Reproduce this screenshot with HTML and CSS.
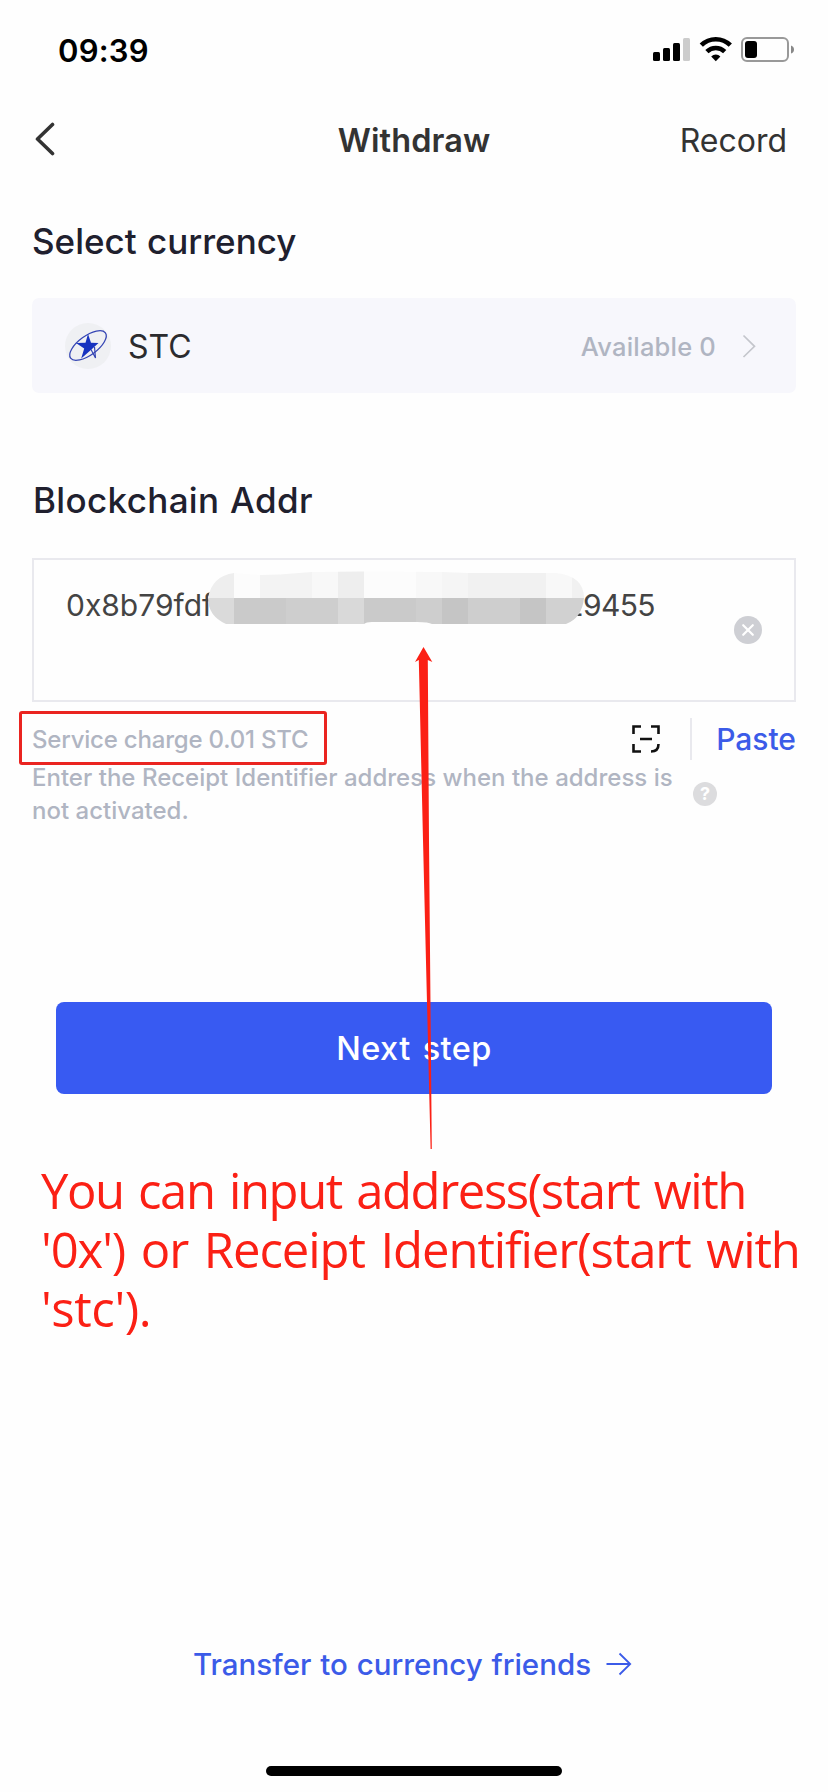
FILE: index.html
```html
<!DOCTYPE html>
<html lang="en">
<head>
<meta charset="utf-8">
<title>Withdraw</title>
<link rel="stylesheet" href="styles.css">
</head>
<body>
<div class="screen">
  <div class="status">
    <span class="time">09:39</span>
    <svg class="status-icons" width="144" height="28" viewBox="652 36 144 28">
      <rect x="653" y="52" width="7" height="9" rx="1.5"/>
      <rect x="663" y="48" width="7" height="13" rx="1.5"/>
      <rect x="673" y="43" width="7" height="18" rx="1.5"/>
      <rect x="683" y="38" width="7" height="23" rx="1.5" fill="#ccc"/>
      <g fill="none" stroke="#000" stroke-width="4.6">
        <path d="M701.300 45.2a20.500 20.500 0 0 1 29 0"/>
        <path d="M706.900 51.600a12.800 12.800 0 0 1 17.800 0"/>
      </g>
      <path d="M711.200 56.400a6.600 6.600 0 0 1 9.200 0L715.800 61.200z"/>
      <rect x="742" y="38" width="46" height="23" rx="5" fill="none" stroke="#999" stroke-width="2"/>
      <rect x="745" y="41" width="12" height="17" rx="3"/>
      <path d="M791 45.500q3 1 3 4t-3 4z" fill="#888"/>
    </svg>
  </div>
  <header class="nav">
    <svg class="back" width="22" height="36" viewBox="34 122 22 36"><path d="M52.500 124.500L37.500 139l15 14.500" fill="none" stroke="#333" stroke-width="3.600" stroke-linecap="round" stroke-linejoin="round"/></svg>
    <h1 class="title">Withdraw</h1>
    <span class="record">Record</span>
  </header>
  <main class="content">
    <h2 class="heading heading-currency">Select currency</h2>
    <div class="currency">
      <svg class="coin" width="46" height="46" viewBox="65 323 46 46">
        <circle cx="88" cy="346" r="23" fill="#eff0f3"/>
        <ellipse cx="88" cy="345.500" rx="21.500" ry="9.500" transform="rotate(-36 88 345.500)" fill="none" stroke="#3646b4" stroke-width="1.300"/>
        <path d="M91 349.500l4.500 8.500-1-11" fill="none" stroke="#3646b4" stroke-width="1.200"/>
        <path d="M88 334l3 8.800 7.500.2-6.500 6-10.800 9.500 3-10-8.200-5.500 9.500-.2z" fill="#1733c0"/>
      </svg>
      <span class="symbol">STC</span>
      <span class="available">Available 0</span>
      <svg class="chevron" width="14" height="24" viewBox="741 334 14 24"><path d="M742.500 335.500l11 10.800-11 10.700" fill="none" stroke="#c4c6cc" stroke-width="1.700"/></svg>
    </div>
    <h2 class="heading heading-address">Blockchain Addr</h2>
    <div class="address-box">
      <div class="address"><span class="addr-start">0x8b79fdf</span><span class="addr-end">29455</span></div>
      <svg class="clear" width="28" height="28" viewBox="0 0 28 28"><circle cx="14" cy="14" r="14" fill="#cecfd4"/><path d="M9.200 9.200l9.600 9.600m0-9.600l-9.600 9.600" stroke="#fff" stroke-width="2.200" stroke-linecap="round"/></svg>
      <svg class="mosaic" width="378" height="54" viewBox="207 571 378 54">
        <defs><clipPath id="blur-shape"><path d="M234 573L260 575 280 574.500 312 572 364 571.500 442 572 468 573H556Q584 576 584 598 582 618 566 624H432Q428 621.500 412 622H372Q366 622 364 624H226Q208 616 208 598 212 576 234 573z"/></clipPath></defs>
        <g clip-path="url(#blur-shape)" shape-rendering="crispEdges">
          <path fill="#eee" d="M208 571h26v27h-26zM338 571h26v27h-26z"/>
          <path fill="#fcfcfc" d="M234 571h26v27h-26zM364 571h52v27h-52z"/>
          <path fill="#f3f3f3" d="M260 571h52v27h-52z"/>
          <path fill="#f8f8f8" d="M312 571h26v27h-26zM416 571h26v27h-26zM546 571h26v27h-26z"/>
          <path fill="#f5f5f5" d="M442 571h26v27h-26z"/>
          <path fill="#f1f1f1" d="M468 571h78v27h-78zM572 571h12v27h-12z"/>
          <path fill="#dadada" d="M208 598h26v26h-26z"/>
          <path fill="#cecece" d="M286 598h52v26h-52zM468 598h52v26h-52zM416 598h26v26h-26z"/>
          <path fill="#cacaca" d="M234 598h52v26h-52zM364 598h52v26h-52z"/>
          <path fill="#c5c5c5" d="M442 598h26v26h-26zM520 598h26v26h-26z"/>
          <path fill="#d9d9d9" d="M338 598h26v26h-26z"/>
          <path fill="#d1d1d1" d="M546 598h38v26h-38z"/>
        </g>
      </svg>
    </div>
    <div class="actions">
      <span class="fee">Service charge 0.01 STC</span>
      <svg class="scan" width="28" height="28" viewBox="0 0 28 28"><path d="M1.500 9V1.500H9M19 1.500h7.500V9M1.500 19v7.500H9M26.500 19q0 7.500-7.500 7.500M8 14h12" fill="none" stroke="#111" stroke-width="2.600"/></svg>
      <span class="divider"></span>
      <span class="paste">Paste</span>
    </div>
    <div class="hint">
      <p class="hint-text">Enter the Receipt Identifier address when the address is<br>not activated.</p>
      <span class="help">?</span>
    </div>
    <button class="next">Next step</button>
    <p class="note"><span class="note-line note-first">You can input address(start with</span> <span class="note-line note-second">'0x') or Receipt Identifier(start with</span> <span class="note-line note-third">'stc').</span></p>
    <a class="transfer"><span>Transfer to currency friends</span><svg width="26" height="24" viewBox="0 0 26 24"><path d="M.5 12H24M13.500 1.500L24.200 12 13.500 22.500" fill="none" stroke="#3b5be8" stroke-width="1.800"/></svg></a>
  </main>
  <div class="home-bar"></div>
  <div class="fee-mark"></div>
  <svg class="arrow" width="20" height="504" viewBox="414 646 20 504"><path d="M423.500 647L432.300 662 427.800 660 429 840 431.800 1149H430.600L423 840 418.800 660 415 662z" fill="#fb2015"/></svg>
</div>
</body>
</html>
```
FILE: styles.css
```css
* { box-sizing: border-box; }
body { margin: 0; background: #fefefe; }
h1, h2, p { margin: 0; font-weight: 450; }
svg { flex: none; display: block; }
.screen {
  position: relative;
  width: 828px;
  height: 1792px;
  background: #fefefe;
  font-family: Inter, "Liberation Sans", sans-serif;
  white-space: nowrap;
  display: flex;
  flex-direction: column;
}
.status {
  height: 100px;
  padding: 0 32px 0 58px;
  display: flex;
  align-items: center;
  justify-content: space-between;
}
.time { font-size: 31px; font-weight: 600; color: #000; letter-spacing: 0.200px; }
.nav {
  height: 80px;
  padding: 0 41px 0 34px;
  display: grid;
  grid-template-columns: 1fr auto 1fr;
  align-items: center;
  color: #333;
}
.title { font-size: 32.500px; font-weight: 560; padding-left: 7px; letter-spacing: 0.100px; }
.record { font-size: 32px; justify-self: end; }
.content { flex: 1; display: flex; flex-direction: column; padding: 31px 32px 0; }
.heading { font-size: 35px; line-height: 60px; color: #20202e; }
.heading-currency { word-spacing: 1px; }
.currency {
  margin-top: 27px;
  height: 95px;
  padding: 1px 40px 0 33px;
  border-radius: 7px;
  background: #f7f7fc;
  display: flex;
  align-items: center;
}
.symbol { margin-left: 17px; font-size: 32px; color: #2b2b2e; }
.available { margin-left: auto; font-size: 25.500px; font-weight: 450; letter-spacing: 0.200px; color: #b0b5c2; }
.chevron { margin-left: 26px; }
.heading-address { margin-top: 77px; padding-left: 1px; letter-spacing: 0.350px; word-spacing: 1px; }
.address-box {
  position: relative;
  margin-top: 28px;
  height: 144px;
  padding: 0 32px;
  border: 2px solid #e9e9ee;
  display: flex;
  align-items: center;
  justify-content: space-between;
}
.address { align-self: flex-start; margin-top: 25px; line-height: 40px; font-size: 30px; color: #444; display: flex; width: 589px; justify-content: space-between; }
.addr-end { letter-spacing: -0.600px; }
.mosaic { position: absolute; left: 173px; top: 11px; }
.actions { margin-top: 16px; height: 42px; display: flex; align-items: center; }
.fee { font-size: 24px; color: #b0b5c2; font-weight: 450; letter-spacing: -0.200px; }
.scan { margin-left: auto; }
.divider { width: 2px; height: 42px; margin: 0 24px 0 30px; background: #e9e9ee; }
.paste { font-size: 30px; color: #3b5be8; font-weight: 500; }
.hint { margin-top: 1px; display: flex; align-items: center; }
.hint-text { width: 661px; font-size: 24px; line-height: 33px; color: #b0b5c2; word-spacing: 0.100px; }
.help {
  width: 24px;
  height: 24px;
  border-radius: 50%;
  background: #dcdcde;
  color: #fff;
  font-size: 18px;
  font-weight: 700;
  line-height: 24px;
  text-align: center;
}
.next {
  margin: 175px 24px 0;
  height: 92px;
  border: 0;
  border-radius: 8px;
  background: #385af2;
  color: #fff;
  font: 450 32.500px Inter, sans-serif;
  letter-spacing: 0.400px;
  word-spacing: 3px;
}
.note {
  margin: 67px 0 0 9px;
  font: 400 49px/59px "Open Sans", "Noto Sans", sans-serif;
  color: #fb2015;
}
.note-line { display: block; }
.note-first { letter-spacing: -1.400px; word-spacing: 3px; }
.note-second { letter-spacing: -1.080px; word-spacing: 4px; }
.note-third { letter-spacing: -0.400px; }
.transfer {
  margin: 304px 0 0 161px;
  height: 44px;
  display: flex;
  align-items: center;
  gap: 15px;
  font-size: 29.500px;
  font-weight: 450;
  word-spacing: 1px;
  color: #3b5be8;
}
.home-bar { width: 296px; height: 10px; margin: 0 auto 16px; border-radius: 5px; background: #000; }
.fee-mark { position: absolute; left: 19px; top: 711px; width: 308px; height: 54px; border: 3px solid #ea2420; border-radius: 3px; }
.arrow { position: absolute; left: 414px; top: 646px; }
```
